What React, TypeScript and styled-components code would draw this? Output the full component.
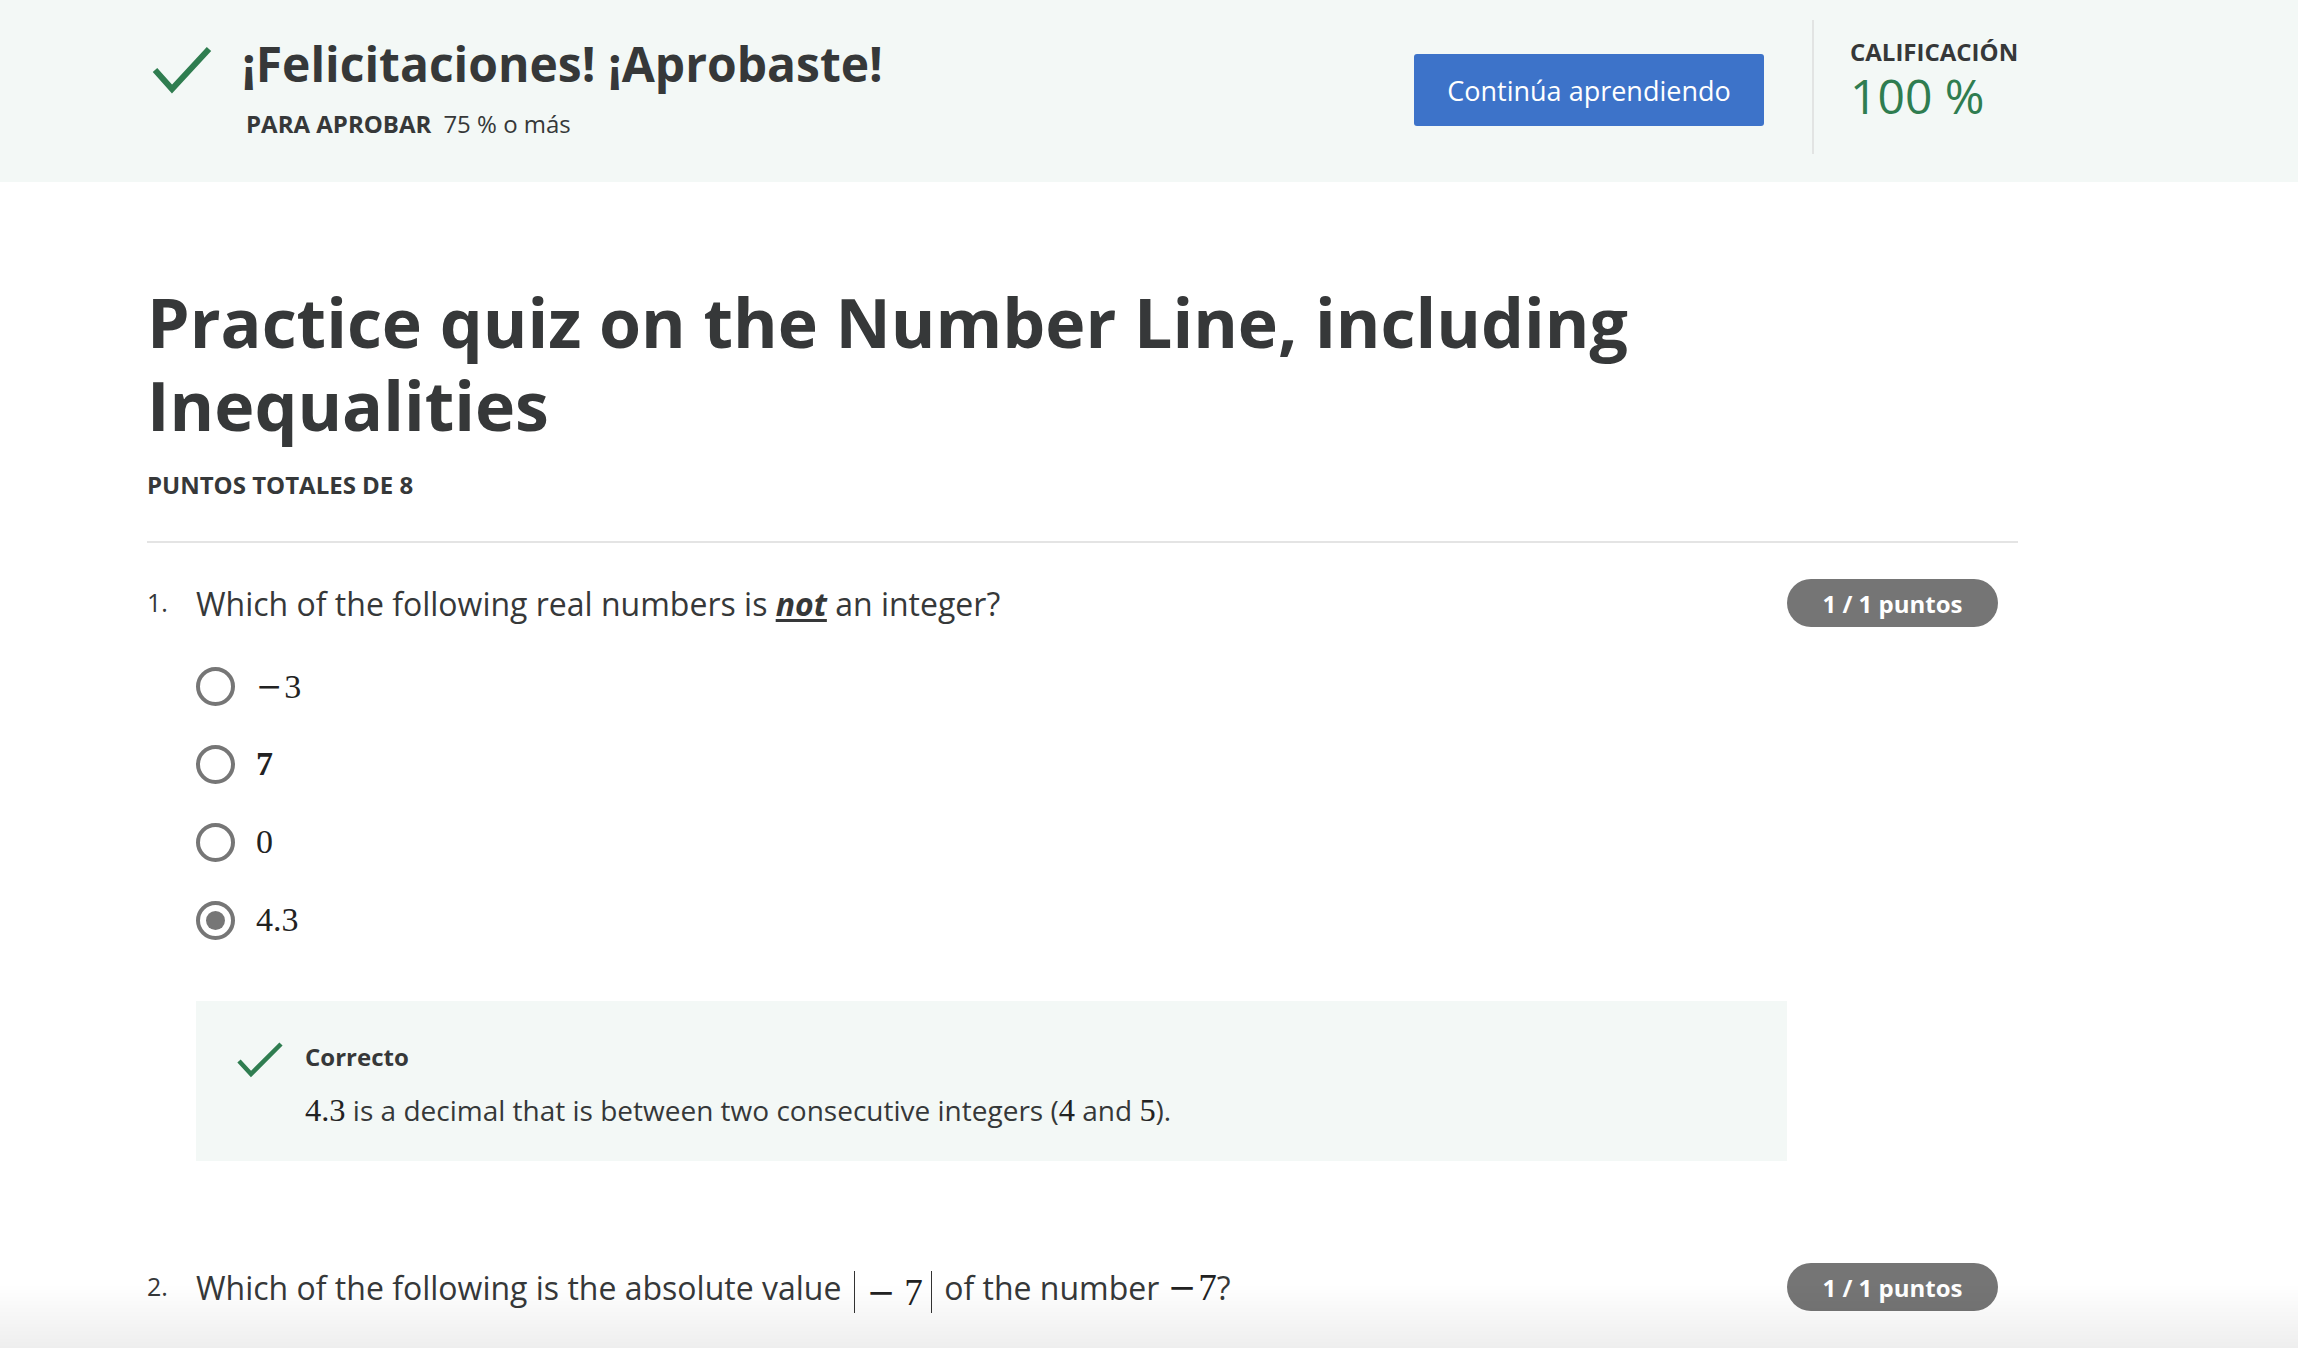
import React from "react";
import styled, { createGlobalStyle } from "styled-components";

const GlobalStyle = createGlobalStyle`
  html, body { margin: 0; padding: 0; background: #ffffff; }
  body {
    font-family: "Open Sans", "Noto Sans", "Liberation Sans", sans-serif;
    color: #373a3c;
    -webkit-font-smoothing: antialiased;
  }
  * { box-sizing: border-box; }
`;

const GREEN = "#2f7d50";
const TEXT = "#363839";

/* ---------- Header ---------- */
const HeaderBar = styled.header`
  height: 182px;
  background: #f3f8f6;
`;

const HeaderInner = styled.div`
  display: flex;
  align-items: flex-start;
  height: 100%;
  padding: 0 280px 0 150px;
`;

const LeftGroup = styled.div`
  flex: 1;
  display: flex;
  align-items: flex-start;
  padding-top: 44px;
`;

const TitleBlock = styled.div`
  margin-left: 28px;
  margin-top: -10px;
`;

const PassTitle = styled.h1`
  margin: 0;
  font-size: 48px;
  line-height: 60px;
  font-weight: 700;
  color: ${TEXT};
`;

const PassInfo = styled.div`
  margin-top: 14px;
  padding-left: 4px;
  font-size: 24px;
  line-height: 32px;
  color: ${TEXT};
  display: flex;
  align-items: baseline;
`;

const PassLabel = styled.span`
  font-weight: 700;
  text-transform: uppercase;
`;

const PassValue = styled.span`
  margin-left: 12px;
  font-weight: 400;
`;

const PrimaryButton = styled.button`
  margin-top: 54px;
  margin-right: 48px;
  width: 350px;
  height: 72px;
  border: none;
  border-radius: 3px;
  background: #3d73c9;
  color: #ffffff;
  font-family: "Open Sans", "Liberation Sans", sans-serif;
  font-size: 27px;
  font-weight: 400;
  cursor: pointer;
`;

const VDivider = styled.div`
  margin-top: 20px;
  width: 2px;
  height: 134px;
  background: #e2e4e3;
`;

const GradeBlock = styled.div`
  width: 204px;
  padding-left: 36px;
  padding-top: 38px;
`;

const GradeLabel = styled.div`
  font-size: 24px;
  line-height: 28px;
  font-weight: 700;
  text-transform: uppercase;
  color: ${TEXT};
  white-space: nowrap;
`;

const GradeValue = styled.div`
  font-size: 48px;
  line-height: 52px;
  font-weight: 400;
  color: ${GREEN};
  margin-top: 4px;
  white-space: nowrap;
`;

/* ---------- Check icon ---------- */
type CheckProps = {
  w: number;
  h: number;
  pts: string;
  stroke: number;
};

const CheckSvg = styled.svg`
  flex: none;
  display: block;
`;

function CheckIcon({ w, h, pts, stroke }: CheckProps) {
  return (
    <CheckSvg width={w} height={h} viewBox={`0 0 ${w} ${h}`}>
      <polyline
        points={pts}
        fill="none"
        stroke={GREEN}
        strokeWidth={stroke}
        strokeLinecap="butt"
        strokeLinejoin="miter"
      />
    </CheckSvg>
  );
}

/* ---------- Main ---------- */
const Main = styled.main`
  padding: 0 280px 200px 147px;
`;

const QuizTitle = styled.h2`
  margin: 98px 0 0;
  font-size: 68px;
  line-height: 83px;
  font-weight: 700;
  color: ${TEXT};
  max-width: 1580px;
`;

const TotalPoints = styled.div`
  margin-top: 23px;
  font-size: 24px;
  line-height: 31px;
  font-weight: 700;
  text-transform: uppercase;
  color: ${TEXT};
`;

const HRule = styled.hr`
  margin: 41px 0 0;
  border: none;
  border-top: 2px solid #e4e4e4;
`;

const Question = styled.section<{ $gap: number }>`
  display: grid;
  grid-template-columns: 49px 1fr 211px;
  padding-right: 20px;
  margin-top: ${(p) => p.$gap}px;
`;

const QNumber = styled.div`
  font-size: 25px;
  line-height: 45px;
  padding-top: 1px;
  color: ${TEXT};
`;

const QBody = styled.div`
  min-width: 0;
`;

const QText = styled.div`
  font-size: 32px;
  line-height: 45px;
  padding-top: 2px;
  color: ${TEXT};
`;

const Emph = styled.span`
  font-weight: 700;
  font-style: italic;
  text-decoration: underline;
  text-underline-offset: 3px;
`;

const Badge = styled.div`
  height: 48px;
  border-radius: 24px;
  background: #757575;
  color: #ffffff;
  font-size: 24px;
  font-weight: 700;
  display: flex;
  align-items: center;
  justify-content: center;
`;

const Options = styled.div`
  margin-top: 40px;
  display: flex;
  flex-direction: column;
  gap: 38px;
`;

const OptionRow = styled.label`
  display: flex;
  align-items: center;
  gap: 21px;
  height: 40px;
`;

const Radio = styled.span<{ $checked?: boolean }>`
  flex: none;
  width: 39px;
  height: 39px;
  border-radius: 50%;
  border: 4px solid #767676;
  display: flex;
  align-items: center;
  justify-content: center;
  &::after {
    content: "";
    display: ${(p) => (p.$checked ? "block" : "none")};
    width: 19px;
    height: 19px;
    border-radius: 50%;
    background: #767676;
  }
`;

const Math = styled.span<{ $bold?: boolean }>`
  font-family: "Liberation Serif", "DejaVu Serif", serif;
  font-size: 1.16em;
  font-weight: ${(p) => (p.$bold ? 700 : 400)};
  color: #222;
  white-space: nowrap;
`;

const OptionMath = styled(Math)`
  font-size: 34px;
  line-height: 40px;
`;

const Minus = styled.span<{ $before?: number; $after?: number }>`
  font-family: "DejaVu Serif", "Liberation Serif", serif;
  font-size: 0.92em;
  font-weight: 400;
  vertical-align: 1px;
  margin-left: ${(p) => p.$before ?? 0}px;
  margin-right: ${(p) => p.$after ?? 3}px;
`;

const Abs = styled.span`
  display: inline-block;
  border-left: 1.5px solid #333;
  border-right: 1.5px solid #333;
  padding: 3px 8px 0 0;
  line-height: 1.05;
  margin: 0 4px;
  vertical-align: -5px;
`;

const Feedback = styled.div`
  margin-top: 61px;
  background: #f3f8f6;
  padding: 39px 24px 31px 40px;
  display: grid;
  grid-template-columns: 48px 1fr;
  column-gap: 21px;
`;

const FeedbackTitle = styled.div`
  font-size: 24px;
  line-height: 30px;
  font-weight: 700;
  color: ${TEXT};
  padding-top: 2px;
`;

const FeedbackText = styled.div`
  grid-column: 2;
  margin-top: 13px;
  font-size: 28px;
  line-height: 39px;
  color: ${TEXT};
`;

const BottomShade = styled.div`
  position: fixed;
  left: 0;
  right: 0;
  bottom: 0;
  height: 64px;
  pointer-events: none;
  background: linear-gradient(to bottom, rgba(0, 0, 0, 0), rgba(0, 0, 0, 0.065));
`;

type Opt = { label: React.ReactNode; checked?: boolean; bold?: boolean };

const q1Options: Opt[] = [
  {
    label: (
      <>
        <Minus $after={2}>{"\u2212"}</Minus>3
      </>
    ),
  },
  { label: "7", bold: true },
  { label: "0" },
  { label: "4.3", checked: true },
];

export default function App() {
  return (
    <>
      <GlobalStyle />
      <HeaderBar>
        <HeaderInner>
          <LeftGroup>
            <CheckIcon w={64} h={52} pts="5,26 22,45 59,5" stroke={6} />
            <TitleBlock>
              <PassTitle>¡Felicitaciones! ¡Aprobaste!</PassTitle>
              <PassInfo>
                <PassLabel>Para aprobar</PassLabel>
                <PassValue>75 % o más</PassValue>
              </PassInfo>
            </TitleBlock>
          </LeftGroup>
          <PrimaryButton>Continúa aprendiendo</PrimaryButton>
          <VDivider />
          <GradeBlock>
            <GradeLabel>Calificación</GradeLabel>
            <GradeValue>100 %</GradeValue>
          </GradeBlock>
        </HeaderInner>
      </HeaderBar>

      <Main>
        <QuizTitle>Practice quiz on the Number Line, including Inequalities</QuizTitle>
        <TotalPoints>Puntos totales de 8</TotalPoints>
        <HRule />

        <Question $gap={36}>
          <QNumber>1.</QNumber>
          <QBody>
            <QText>
              Which of the following real numbers is <Emph>not</Emph> an integer?
            </QText>
            <Options>
              {q1Options.map((o, i) => (
                <OptionRow key={i}>
                  <Radio $checked={o.checked} />
                  <OptionMath $bold={o.bold}>{o.label}</OptionMath>
                </OptionRow>
              ))}
            </Options>
            <Feedback>
              <CheckIcon w={48} h={38} pts="3,21 15,34 45,4" stroke={4.5} />
              <FeedbackTitle>Correcto</FeedbackTitle>
              <FeedbackText>
                <Math>4.3</Math> is a decimal that is between two consecutive integers (
                <Math>4</Math> and <Math>5</Math>).
              </FeedbackText>
            </Feedback>
          </QBody>
          <Badge>1 / 1 puntos</Badge>
        </Question>

        <Question $gap={102}>
          <QNumber>2.</QNumber>
          <QBody>
            <QText>
              Which of the following is the absolute value{" "}
              <Math>
                <Abs>
                  <Minus $before={12} $after={9}>
                    {"\u2212"}
                  </Minus>
                  7
                </Abs>
              </Math>{" "}
              of the number{" "}
              <Math>
                <Minus $after={2}>{"\u2212"}</Minus>7
              </Math>
              ?
            </QText>
          </QBody>
          <Badge>1 / 1 puntos</Badge>
        </Question>
      </Main>
      <BottomShade />
    </>
  );
}
